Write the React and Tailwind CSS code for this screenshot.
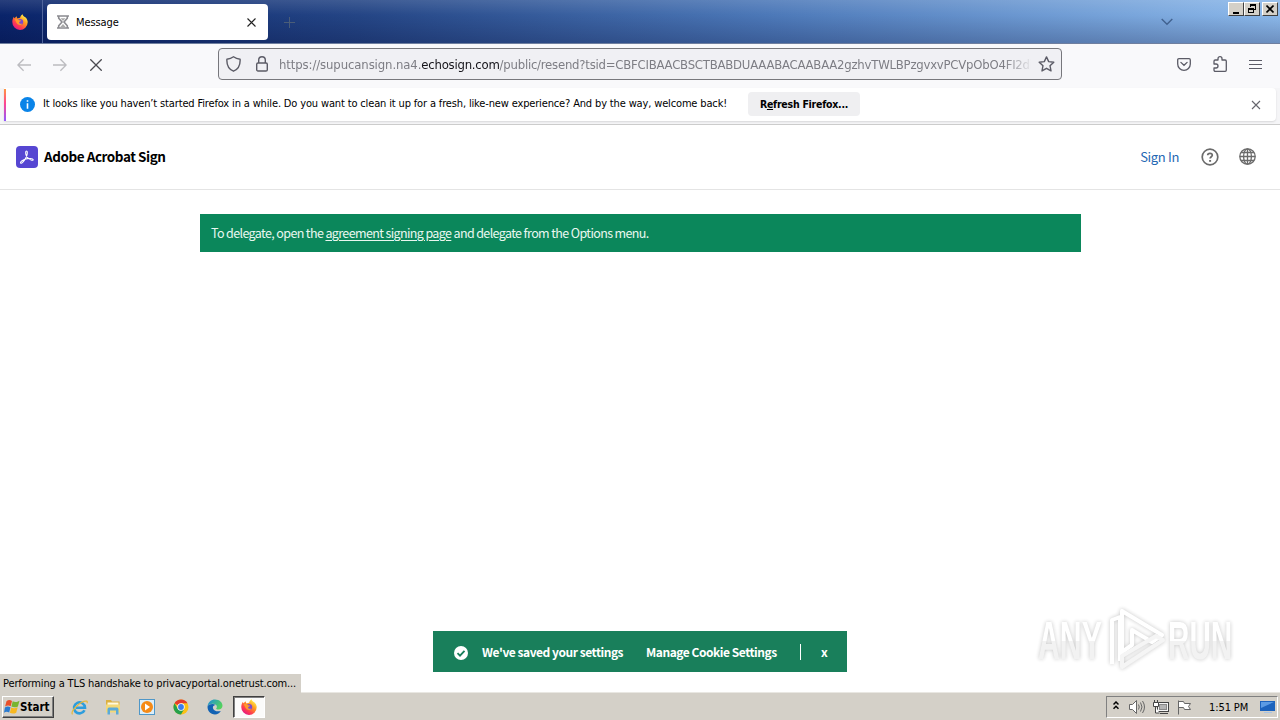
import React from "react";

const ui = "font-['DejaVu_Sans_Condensed','DejaVu_Sans',sans-serif] [font-stretch:condensed]";
const clean = "font-['Noto_Sans_CJK_SC',sans-serif]";

function Firefox({ size, className = "" }) {
  return (
    <svg width={size} height={size} viewBox="0 0 16 16" className={className}>
      <defs>
        <linearGradient id="ffx" x1="0.85" y1="0.1" x2="0.2" y2="0.95">
          <stop offset="0" stopColor="#fff44f" />
          <stop offset="0.35" stopColor="#ff9a1f" />
          <stop offset="0.7" stopColor="#ff3f4e" />
          <stop offset="1" stopColor="#e31587" />
        </linearGradient>
      </defs>
      <path d="M15.3 6.2C14.9 4.6 13.6 3.4 12.4 2.8 11.5 2.1 10.8 1.3 10.6 0.2 9 1.2 8.2 2.6 8.1 3.8 7.2 3.8 6.3 4 5.6 4.4 4.9 3.8 4.7 3 4.8 2.2 3.8 2.8 3.1 3.5 2.6 4.2 2.2 4 2 3.3 2 2.7 0.9 3.9 0.2 6.2 0.3 8.1a7.7 7.7 0 0 0 15.4.2c0-.8-.1-1.5-.4-2.1z" fill="url(#ffx)" />
      <circle cx="8.2" cy="8" r="3" fill="#7a48d0" />
      <path d="M2.600 5.400c1.800-.8 3.600-.4 4.600.8l2 .3c0 .9-1.800 1-2.100 1.900-.1 1.300 1.900 1.800 3.200 1-1 2.400-4.600 2-5.700-.3-.8-1.500-1-2.800-2-3.700z" fill="#ff9a2a" />
    </svg>
  );
}

function WinButton({ children }) {
  return (
    <span className="flex h-[14px] w-4 items-center justify-center border border-t-white border-l-white border-r-[#404040] border-b-[#404040] bg-[#d4d0c8]">
      {children}
    </span>
  );
}

function TitleBar() {
  return (
    <div className="flex h-[44px] shrink-0 border-b border-[#6f7f9f] bg-[linear-gradient(to_bottom,rgba(255,255,255,0.12),rgba(0,0,0,0)_35%,rgba(0,0,40,0.22)),linear-gradient(to_right,#0a246a,#244585_28%,#4c78b8_60%,#8bb8ea)]">
      <div className="flex w-[43px] shrink-0 items-center border-r border-[#50659c] pl-3">
        <Firefox size={16} />
      </div>
      <div className="mt-1 ml-1 flex h-9 w-[221px] shrink-0 items-center rounded-[4px] bg-white pl-[10px] pr-[11px]">
        <svg width="12" height="14" viewBox="0 0 12 14" fill="none" stroke="#8b8b90" strokeWidth="1.6">
          <path d="M0 1h12M0 13h12M1.7 1v2.2L5 7l-3.300 3.800V13M10.300 1v2.200L7 7l3.300 3.800V13" />
          <path d="M3.500 3.300h5L6 6zM6 9l2.700 3H3.300z" fill="#aaa" stroke="none" />
        </svg>
        <span className={`${ui} ml-[7px] flex-1 pt-[2px] text-[11px] leading-4 tracking-[-0.1px] text-black`}>Message</span>
        <svg className="relative right-px" width="9" height="9" viewBox="0 0 9 9" stroke="#222" strokeWidth="1.1"><path d="M.5.5l8 8M8.500.5l-8 8" /></svg>
      </div>
      <svg className="mt-[17px] ml-[16px]" width="11" height="11" viewBox="0 0 11 11" stroke="#4b5d78"><path d="M5.500 0v11M0 5.500h11" /></svg>
      <div className="flex-1" />
      <svg className="mt-[18px] mr-[55px]" width="12" height="8" viewBox="0 0 12 8" fill="none" stroke="#42628f" strokeWidth="1.4"><path d="M.7 1L6 6.300 11.300 1" /></svg>
      <div className="mt-[2px] mr-[2px] flex h-[14px]">
        <WinButton><svg width="10" height="10"><path d="M2 8h6v2H2z" /></svg></WinButton>
        <WinButton>
          <svg width="10" height="10" fill="none" stroke="#000" shapeRendering="crispEdges"><path d="M3.500 3V1.500h5v4H7M3 1.500h6M1.500 4.500h5v4h-5zM1 5.500h6M3 .5h6" /></svg>
        </WinButton>
        <span className="w-[2px]" />
        <WinButton><svg width="8" height="8" viewBox="0 0 8 8" stroke="#000" strokeWidth="1.6"><path d="M.5.5l7 7M7.500.5l-7 7" /></svg></WinButton>
      </div>
    </div>
  );
}

function NavBar() {
  return (
    <div className="flex h-[44px] shrink-0 items-center bg-[#f9f9fb] pb-1">
      <svg className="mt-px ml-[17px]" width="14" height="14" viewBox="0 0 14 14" fill="none" stroke="#bcbcc0" strokeWidth="1.3"><path d="M14 7H1M6.600 1.200L.9 7l5.700 5.800" /></svg>
      <svg className="mt-px ml-[22px]" width="14" height="14" viewBox="0 0 14 14" fill="none" stroke="#bcbcc0" strokeWidth="1.3"><path d="M0 7h13M7.400 1.200L13.100 7l-5.700 5.800" /></svg>
      <svg className="mt-px ml-[23px]" width="12" height="12" viewBox="0 0 12 12" stroke="#4a4a50" strokeWidth="1.3"><path d="M.3.3l11.400 11.400M11.700.3L.3 11.700" /></svg>
      <div className="ml-[116px] flex h-8 w-[844px] items-center rounded-[4px] border border-[#77777c] bg-[#f0f0f4] pl-[7px]">
        <svg width="15" height="16" viewBox="0 0 15 16" fill="none" stroke="#5b5b66" strokeWidth="1.4" strokeLinejoin="round"><path d="M7.500.8c2 1.500 4.300 2.200 6.600 2.400.3 5-1.500 9.800-6.600 12C2.400 13 .6 8.200.9 3.200 3.200 3 5.500 2.300 7.500.8z" /></svg>
        <svg className="ml-[15px]" width="12" height="16" viewBox="0 0 12 16" fill="none" stroke="#5b5b66" strokeWidth="1.4"><rect x=".7" y="7" width="10.600" height="8" rx="1.3" /><path d="M2.700 7V4a3.300 3.300 0 0 1 6.600 0v3" /></svg>
        <div className="ml-[11px] w-[752px] pt-px whitespace-nowrap [mask-image:linear-gradient(to_right,#000_725px,transparent_754px)]">
          <span className={`${ui} block text-[13px] leading-5 tracking-[-0.23px] text-[#7d7d84]`}>
            <span className="tracking-[-0.11px]">https://supucansign.na4.</span><span className="text-[#15141a]">echosign.com</span>/public/resend?tsid=CBFCIBAACBSCTBABDUAAABACAABAA2gzhvTWLBPzgvxvPCVpObO4FI2di
          </span>
        </div>
        <svg className="ml-[7px] shrink-0" width="17" height="16" viewBox="0 0 17 16" fill="none" stroke="#5b5b66" strokeWidth="1.4" strokeLinejoin="round"><path d="M8.500.9l2.200 4.700 5.100.6-3.800 3.500 1 5.200-4.500-2.600L4 14.900l1-5.200L1.200 6.200l5.100-.6z" /></svg>
      </div>
      <svg className="ml-[115px]" width="14" height="13" viewBox="0 0 14 13" fill="none" stroke="#5b5b66" strokeWidth="1.3" strokeLinecap="round"><path d="M1.900.7h10.200c.7 0 1.200.5 1.200 1.200V6A6.300 6.300 0 0 1 .7 6V1.900C.7 1.200 1.200.7 1.900.7z" /><path d="M3.900 4.400L7 7.300l3.100-2.900" /></svg>
      <svg className="ml-[22px]" width="14" height="16" viewBox="0 0 14 16" fill="none" stroke="#5b5b66" strokeWidth="1.3" strokeLinejoin="round"><path d="M1 7V5.300C1 4.600 1.400 4 2.200 4H5V2.700a2 2 0 0 1 4 0V4h3.200c.7 0 1.100.5 1.100 1.200v8.900c0 .7-.4 1.200-1.100 1.200H2.200C1.500 15.300 1 14.800 1 14.100V12h2a1.900 1.900 0 0 0 0-4H1z" /></svg>
      <svg className="ml-[22px]" width="13" height="11" viewBox="0 0 13 11" stroke="#5b5b66" strokeWidth="1.2"><path d="M0 1.500h13M0 5.500h13M0 9.500h13" /></svg>
    </div>
  );
}

function Notice() {
  return (
    <div className="h-[37px] shrink-0 border-b border-[#cccccc] bg-[#f5f5f7] pr-1 pl-1">
      <div className="flex h-[33px] items-center rounded-r-[4px] bg-white shadow-[0_1px_2px_rgba(0,0,0,0.12)]">
        <div className="h-8 w-[2px] bg-[linear-gradient(to_bottom,#ff9640,#ff4590_45%,#9059ff)]" />
        <svg className="ml-[14px]" width="15" height="15" viewBox="0 0 15 15"><circle cx="7.500" cy="7.500" r="7.500" fill="#0a84e8" /><path d="M6.700 3.200h1.600v1.600H6.700zM6.700 6.200h1.600v5.500H6.700z" fill="#fff" /></svg>
        <span className={`${ui} ml-2 w-[705px] pb-[2px] text-[11px] leading-4 tracking-[-0.148px] whitespace-nowrap text-black`}>It looks like you haven’t started Firefox in a while. Do you want to clean it up for a fresh, like-new experience? And by the way, welcome back!</span>
        <span className={`${ui} mb-px flex h-[24px] w-[112px] items-center justify-center rounded-[4px] bg-[#efeff1] pt-px text-[10.5px] font-bold tracking-[-0.25px] whitespace-nowrap text-black`}><span>R<u>e</u>fresh Firefox...</span></span>
        <div className="flex-1" />
        <svg className="mr-[15px]" width="10" height="10" viewBox="0 0 10 10" stroke="#66666d" strokeWidth="1.1"><path d="M1 1l8 8M9 1L1 9" /></svg>
      </div>
    </div>
  );
}

function PageHeader() {
  return (
    <header className="flex h-[65px] shrink-0 items-center border-b border-[#e4e4e4] px-4">
      <svg width="22" height="22" viewBox="0 0 22 22">
        <rect width="22" height="22" rx="4" fill="#5646d2" />
        <path d="M4.600 17c-.8-1.200 2.600-3.500 6.400-4.200 3-.5 6-.4 6.200.8.2 1.300-2.600.6-4.400-.9-1.900-1.500-3.300-4.700-3.100-6.600.1-1.400 1.500-1.400 1.600 0 .2 2-1.200 5.500-2.700 7.900-1.200 1.800-3.400 4-4 3z" fill="none" stroke="#fff" strokeWidth="1.1" />
      </svg>
      <span className={`${clean} ml-[6px] flex-1 pb-[2px] text-[13.5px] leading-5 font-bold tracking-[-0.45px] text-black`}>Adobe Acrobat Sign</span>
      <span className={`${clean} mr-[22px] text-[13px] leading-5 tracking-[-0.35px] text-[#2467b3]`}>Sign In</span>
      <svg width="18" height="18" viewBox="0 0 18 18" fill="none" stroke="#6b6b6b" strokeWidth="1.7"><circle cx="9" cy="9" r="7.800" /><path d="M6.700 7.300C6.700 4.700 11.300 4.700 11.300 7.200c0 1.500-2.200 1.600-2.200 3.400" /><path d="M8.100 12h2v1.800h-2z" fill="#6b6b6b" stroke="none" /></svg>
      <svg className="mr-2 mb-px ml-5" width="17" height="17" viewBox="0 0 17 17" fill="none" stroke="#6b6b6b" strokeWidth="1.3"><circle cx="8.500" cy="8.500" r="7.700" /><ellipse cx="8.500" cy="8.500" rx="3.900" ry="7.700" /><path d="M8.500.7v15.600M.7 8.500h15.600M2 4.500h13M2 12.500h13" /></svg>
    </header>
  );
}

function Watermark() {
  return (
    <div className="flex h-[68px] w-[202px] items-center opacity-90 [filter:drop-shadow(0_0_2px_rgba(0,0,0,0.25))]">
      <span className="mt-[2px] w-[72px] shrink-0"><span className="inline-block origin-left scale-x-[0.57] bg-[linear-gradient(to_bottom,#fff_50%,#f1f1f1_50%)] bg-clip-text font-['Liberation_Sans',sans-serif] text-[53px] leading-[54px] font-bold text-transparent">ANY</span></span>
      <svg className="shrink-0" width="56" height="64" viewBox="0 0 56 64" fill="none" stroke="#fff" strokeWidth="4" strokeLinejoin="round"><path d="M2 56V12l8-3v44M12 3v41l10-7V22l20 12 10-7L12 3z" /><path d="M12 48v11l41-27-7-4z" stroke="#f4f4f4" /></svg>
      <span className="mt-[2px] ml-[2px] w-[72px] shrink-0"><span className="inline-block origin-left scale-x-[0.56] bg-[linear-gradient(to_bottom,#fff_50%,#f1f1f1_50%)] bg-clip-text font-['Liberation_Sans',sans-serif] text-[53px] leading-[54px] font-bold text-transparent">RUN</span></span>
    </div>
  );
}

function Taskbar() {
  return (
    <div className="flex h-[28px] shrink-0 items-center border-t border-[#e9e7e2] bg-[#d4d0c8] pt-px">
      <div className="ml-[2px] flex h-[22px] w-[52px] items-center border border-t-white border-l-white border-r-[#404040] border-b-[#404040] pl-px shadow-[inset_-1px_-1px_0_#808080]">
        <svg width="16" height="16" viewBox="0 0 16 16">
          <path d="M2.500 2.200C4.500.5 6.200.9 8 1.900L6.700 7.300C5 6.200 3 6.200 1.100 7.600z" fill="#e8502a" />
          <path d="M8.700 2.300c2 .9 4.200 1 6.800-.6l-1.600 5.700c-2 1.300-4.500 1.100-6.500.2z" fill="#79b530" />
          <path d="M.9 8.400c1.900-1.300 3.800-1.200 5.600-.2l-1.300 5.400C3.400 12.500 1.500 12.500 0 13.800z" fill="#2a7bd0" />
          <path d="M7.200 8.500c2 1 4.100 1 6.500-.2l-1.500 5.400c-2 1.200-4.400 1.200-6.300.1z" fill="#f8b820" />
        </svg>
        <span className={`${ui} text-[11.5px] leading-4 font-bold text-black`}>Start</span>
      </div>
      <svg className="ml-[17px]" width="17" height="17" viewBox="0 0 17 17" fill="none"><path d="M13.500 11.200A5.500 5.500 0 1 1 14 8.700H5" stroke="#2d9ddd" strokeWidth="2.6" /><path d="M1.500 15.400C-1 12.200 10 1.200 15.700 2.100c.8.200.7 1.200.2 2.200" stroke="#e6b93c" strokeWidth="1.2" /></svg>
      <svg className="ml-[17px]" width="16" height="16" viewBox="0 0 16 16"><path d="M1 1h5l1 1.500h7.500V13H1z" fill="#dcb040" /><path d="M2.500 3.500h11v3h-11z" fill="#fff9de" /><path d="M1 5.500h14v8H1z" fill="#f3d878" /><path d="M2.500 15.500v-5C2.500 9 3.500 8.500 4.500 8.500h7c1 0 2 .5 2 2v5h-2.500v-4H5v4z" fill="#5baad8" /></svg>
      <svg className="ml-[18px]" width="16" height="16" viewBox="0 0 16 16"><rect x=".5" y=".5" width="15" height="15" fill="#dceef9" stroke="#4f97c8" /><circle cx="8" cy="8" r="6" fill="#f58a16" /><path d="M6 4.500l5 3.500-5 3.500z" fill="#fff" /></svg>
      <svg className="ml-[18px]" width="16" height="16" viewBox="0 0 16 16"><circle cx="8" cy="8" r="7.500" fill="#fbc116" /><path d="M8 8L1.500 4.250A7.500 7.500 0 0 1 14.500 4.250H8z" fill="#e33b2e" /><path d="M1.500 4.250A7.500 7.500 0 0 0 8 15.500L11.200 10 8 8 5 10z" fill="#25a04b" /><circle cx="8" cy="8" r="3.700" fill="#fff" /><circle cx="8" cy="8" r="2.900" fill="#3b7ded" /></svg>
      <svg className="ml-[18px]" width="16" height="16" viewBox="0 0 16 16"><defs><linearGradient id="edge" x1="0" y1="0" x2="1" y2="0.5"><stop stopColor="#1d8cdd" /><stop offset="1" stopColor="#54d25e" /></linearGradient></defs><path d="M.6 7C1.200 3 4.200.5 8 .5c4.500 0 7.500 3 7.500 6.300 0 2.400-1.800 3.700-4 3.700-1.400 0-2.300-.4-2.300-1 0-.4.7-.7.7-1.800 0-1.500-1.600-2.900-4-2.900C3.500 4.800 1.700 5.700.6 7z" fill="url(#edge)" /><path d="M.6 7C2 5 6.500 4.200 8.500 6c-2.400.1-3 2-2.400 3.500.8 2.200 3.800 3.600 7.700 2.400C12.500 14 10.500 15.500 8 15.500 3.500 15.500 0 11.500.6 7z" fill="#1262b3" /></svg>
      <div className="ml-[10px] flex h-[22px] w-[32px] items-center justify-center border border-t-[#404040] border-l-[#404040] border-r-white border-b-white bg-[#fbfbfa] shadow-[inset_1px_1px_0_#808080]">
        <Firefox size={16} />
      </div>
      <div className="flex-1" />
      <div className="mr-[2px] flex h-[22px] w-[172px] items-center border border-t-[#808080] border-l-[#808080] border-r-white border-b-white pl-[6px]">
        <svg className="mb-[3px]" width="6" height="9" viewBox="0 0 6 9" fill="none" stroke="#000" strokeWidth="1.5"><path d="M.5 3.500L3 1l2.500 2.500M.5 7.800L3 5.300l2.500 2.500" /></svg>
        <svg className="ml-[10px]" width="17" height="14" viewBox="0 0 17 14" fill="none" stroke="#666"><path d="M.5 4.500h3l4-4v13l-4-4h-3z" fill="#fff" /><path d="M9.500 4.500q1.500 2.500 0 5M11.500 2.500q3 4.500 0 9M13.500 1q4 6 0 12" /></svg>
        <svg className="ml-[7px]" width="16" height="15" viewBox="0 0 16 15" fill="none" stroke="#444"><rect x="4.500" y="2.500" width="11" height="9" fill="#f4f4f4" /><rect x="6.500" y="4.500" width="7" height="5" fill="#b4b4b4" stroke="#888" /><path d="M7 13.500h8M.5 2.500h5v4h-5zM1.500 0v2M4.500 0v2M2.500 6.500v6.500h4" fill="#fff" /></svg>
        <svg className="ml-2" width="15" height="15" viewBox="0 0 15 15" fill="#fff" stroke="#666"><path d="M1.500 14.500v-14M1.500 1.500h5l1 2h6l-2 3 2 3h-6l-1-2h-5" /></svg>
        <span className={`${ui} ml-[17px] pt-px text-[11px] leading-4 tracking-[-0.1px] whitespace-nowrap text-black`}>1:51 PM</span>
        <svg className="ml-[12px] shrink-0" width="16" height="14" viewBox="0 0 16 14"><path d="M0 1h15v10H0z" fill="#1c63bd" /><path d="M1 2h13L1 8z" fill="#5b9be4" /><path d="M4 12h8v1H4z" fill="#a9c4e4" /></svg>
      </div>
    </div>
  );
}

export default function App() {
  return (
    <div className="relative flex h-[720px] w-[1280px] flex-col overflow-hidden bg-white">
      <TitleBar />
      <NavBar />
      <Notice />
      <PageHeader />
      <main className="flex-1 px-[200px] pt-6">
        <div className={`${clean} flex h-[38px] w-[881px] items-center bg-[#0b875b] pl-[11px] text-[12.5px] leading-5 tracking-[-0.62px] whitespace-pre text-[#e9f7f0]`}>
          <span>To delegate, open the <span className="underline underline-offset-2">agreement signing page</span> and delegate from the Options menu.</span>
        </div>
      </main>
      <Taskbar />
      <div className="absolute top-[631px] left-[433px] flex h-[41px] w-[414px] items-center bg-[#197f5b] pl-[21px] text-white">
        <svg className="mt-[2px]" width="14" height="14" viewBox="0 0 14 14"><circle cx="7" cy="7" r="7" fill="#fff" /><path d="M3.500 7.200l2.500 2.500 4.500-4.800" fill="none" stroke="#197f5b" strokeWidth="1.8" /></svg>
        <span className={`${clean} mt-px ml-[14px] w-[164px] text-[12px] leading-5 font-bold tracking-[-0.46px] whitespace-nowrap`}>We've saved your settings</span>
        <span className={`${clean} mt-px w-[154px] text-[12px] leading-5 font-bold tracking-[-0.46px] whitespace-nowrap`}>Manage Cookie Settings</span>
        <span className="h-4 w-px bg-white" />
        <span className={`${clean} mt-px ml-[20px] text-[12px] leading-5 font-bold`}>x</span>
      </div>
      <div className="absolute top-[606px] left-[1038px]"><Watermark /></div>
      <div className={`${ui} absolute top-[674px] left-0 flex h-[19px] w-[301px] items-center bg-[#d4d0c8] pt-px pl-[3px] text-[11px] leading-4 tracking-[-0.14px] whitespace-nowrap text-black`}>Performing a TLS handshake to privacyportal.onetrust.com...</div>
    </div>
  );
}
